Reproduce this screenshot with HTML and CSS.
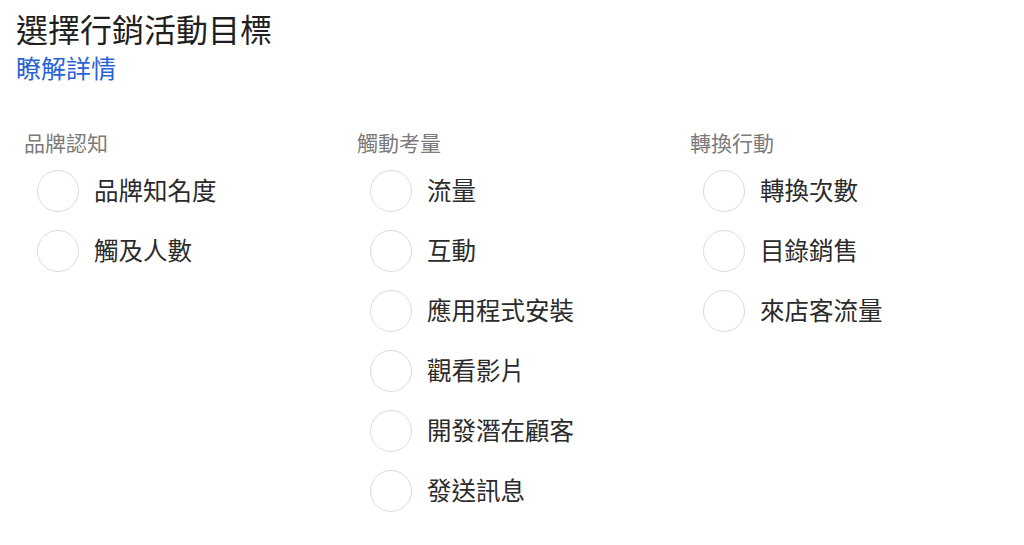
FILE: index.html
```html
<!DOCTYPE html>
<html lang="zh-Hant">
<head>
<meta charset="utf-8">
<link rel="stylesheet" href="styles.css">
</head>
<body>
<div class="page">
  <h1 class="title">選擇行銷活動目標</h1>
  <a class="learn" href="#">瞭解詳情</a>
  <div class="groups">
    <div class="group">
      <div class="group-title">品牌認知</div>
      <ul class="options">
        <li class="option"><span class="radio"></span><span class="label">品牌知名度</span></li>
        <li class="option"><span class="radio"></span><span class="label">觸及人數</span></li>
      </ul>
    </div>
    <div class="group">
      <div class="group-title">觸動考量</div>
      <ul class="options">
        <li class="option"><span class="radio"></span><span class="label">流量</span></li>
        <li class="option"><span class="radio"></span><span class="label">互動</span></li>
        <li class="option"><span class="radio"></span><span class="label">應用程式安裝</span></li>
        <li class="option"><span class="radio"></span><span class="label">觀看影片</span></li>
        <li class="option"><span class="radio"></span><span class="label">開發潛在顧客</span></li>
        <li class="option"><span class="radio"></span><span class="label">發送訊息</span></li>
      </ul>
    </div>
    <div class="group">
      <div class="group-title">轉換行動</div>
      <ul class="options">
        <li class="option"><span class="radio"></span><span class="label">轉換次數</span></li>
        <li class="option"><span class="radio"></span><span class="label">目錄銷售</span></li>
        <li class="option"><span class="radio"></span><span class="label">來店客流量</span></li>
      </ul>
    </div>
  </div>
</div>
</body>
</html>
```

FILE: styles.css
```css
* { box-sizing: border-box; }
html, body {
  margin: 0;
  padding: 0;
  background: #ffffff;
}
body {
  font-family: "Noto Sans CJK TC", "Noto Sans", sans-serif;
  color: #333333;
}
.page {
  padding: 8px 0 0 16px;
}
.title {
  margin: 0;
  font-size: 32px;
  font-weight: 400;
  line-height: 40px;
  color: #1f1f1f;
}
.learn {
  display: block;
  margin-top: 4px;
  font-size: 25px;
  line-height: 30px;
  color: #2b63d6;
  text-decoration: none;
}
.groups {
  display: grid;
  grid-template-columns: 333px 333px 333px;
  margin-top: 48px;
  margin-left: 8px;
}
.group-title {
  font-size: 21px;
  line-height: 24px;
  color: #7a7a7a;
  padding-bottom: 2px;
}
.options {
  list-style: none;
  margin: 14px 0 0 0;
  padding: 0 0 0 13px;
  display: flex;
  flex-direction: column;
  gap: 18px;
}
.option {
  display: flex;
  align-items: center;
  gap: 15px;
  height: 42px;
}
.radio {
  width: 42px;
  height: 42px;
  border-radius: 50%;
  border: 1px solid #dcdcdc;
  flex: none;
}
.label {
  font-size: 24.5px;
  line-height: 30px;
  padding-bottom: 3px;
  color: #2b2b2b;
}
```
